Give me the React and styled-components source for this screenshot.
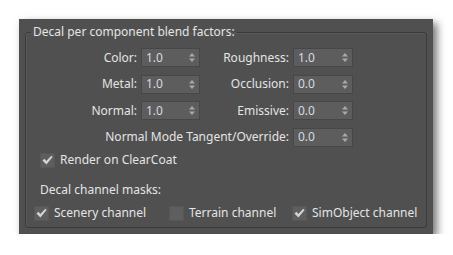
import styled, { createGlobalStyle } from 'styled-components';

const GlobalStyle = createGlobalStyle`
  html, body {
    margin: 0;
    padding: 0;
    background: #ffffff;
  }
  body {
    font-family: "Noto Sans", "Open Sans", sans-serif;
    font-size: 12px;
    line-height: 14px;
  }
`;

const Page = styled.div`
  padding: 19px 0 0 19px;
`;

const Panel = styled.div`
  box-sizing: border-box;
  width: 414px;
  height: 215px;
  padding: 6px;
  background: #505050;
  box-shadow: 4px 4px 8px rgba(0, 0, 0, 0.55);
  display: flex;
`;

const Group = styled.fieldset`
  flex: 1;
  margin: 0;
  padding: 9px 0 0 0;
  border: 1px solid #3a3a3a;
  border-radius: 3px;
  box-shadow: inset 1px 1px 0 #5a5a5a;
  min-width: 0;
`;

const Legend = styled.legend`
  margin-left: 5px;
  padding: 0 2px;
  color: #e4e4e4;
`;

const FactorGrid = styled.div`
  display: grid;
  grid-template-columns: 111px 59px 85px 60px;
  grid-auto-rows: 19px;
  column-gap: 4px;
  row-gap: 7.5px;
  align-items: center;
`;

const Label = styled.span`
  color: #e4e4e4;
  text-align: right;
  white-space: nowrap;
  grid-column: ${p => p.$wide ? '1 / 4' : 'auto'};
`;

const SpinBox = styled.div`
  box-sizing: border-box;
  height: 19px;
  display: flex;
  align-items: center;
  padding: 0 4px 0 4px;
  background: #5d5d5d;
  border: 1px solid #474747;
  color: #d6dae2;
  grid-column: ${p => p.$col || 'auto'};
`;

const SpinValue = styled.span`
  flex: 1;
`;

const Arrows = styled.svg`
  display: block;
`;

const CheckRow = styled.label`
  display: flex;
  align-items: center;
  gap: 5px;
  color: #e4e4e4;
  white-space: nowrap;
`;

const Box = styled.span`
  box-sizing: border-box;
  width: 15px;
  height: 15px;
  background: #5e5e5e;
  border: 1px solid #575757;
  display: flex;
  align-items: center;
  justify-content: center;
`;

const Section = styled.div`
  padding-left: ${p => p.$indent}px;
  margin-top: ${p => p.$top}px;
`;

const SubTitle = styled.div`
  color: #e4e4e4;
  padding-left: 14px;
  margin-top: 15px;
`;

const Channels = styled.div`
  display: grid;
  grid-template-columns: 135px 123px auto;
  align-items: center;
  padding-left: 8px;
  margin-top: 9px;
`;

function Spin({ value, col }) {
  return (
    <SpinBox $col={col}>
      <SpinValue>{value}</SpinValue>
      <Arrows width="6" height="9" viewBox="0 0 6 9">
        <path d="M3 0 L6 3.5 L0 3.5 Z" fill="#a9a9a9" />
        <path d="M0 5.5 L6 5.5 L3 9 Z" fill="#a9a9a9" />
      </Arrows>
    </SpinBox>
  );
}

function Check({ checked, children }) {
  return (
    <CheckRow>
      <Box>
        {checked && (
          <svg width="11" height="10" viewBox="0 0 11 10">
            <path d="M0.5 5.5 L2.5 3.8 L4.3 6 L9.3 0.8 L10.6 2 L4.4 9.4 Z" fill="#d4d4d4" />
          </svg>
        )}
      </Box>
      {children}
    </CheckRow>
  );
}

export default function App() {
  return (
    <Page>
      <GlobalStyle />
      <Panel>
        <Group>
          <Legend>Decal per component blend factors:</Legend>
          <FactorGrid>
            <Label>Color:</Label>
            <Spin value="1.0" />
            <Label>Roughness:</Label>
            <Spin value="1.0" />
            <Label>Metal:</Label>
            <Spin value="1.0" />
            <Label>Occlusion:</Label>
            <Spin value="0.0" />
            <Label>Normal:</Label>
            <Spin value="1.0" />
            <Label>Emissive:</Label>
            <Spin value="0.0" />
            <Label $wide>Normal Mode Tangent/Override:</Label>
            <Spin value="0.0" col="4" />
          </FactorGrid>
          <Section $indent={14} $top={6}>
            <Check checked>Render on ClearCoat</Check>
          </Section>
          <SubTitle>Decal channel masks:</SubTitle>
          <Channels>
            <Check checked>Scenery channel</Check>
            <Check>Terrain channel</Check>
            <Check checked>SimObject channel</Check>
          </Channels>
        </Group>
      </Panel>
    </Page>
  );
}
